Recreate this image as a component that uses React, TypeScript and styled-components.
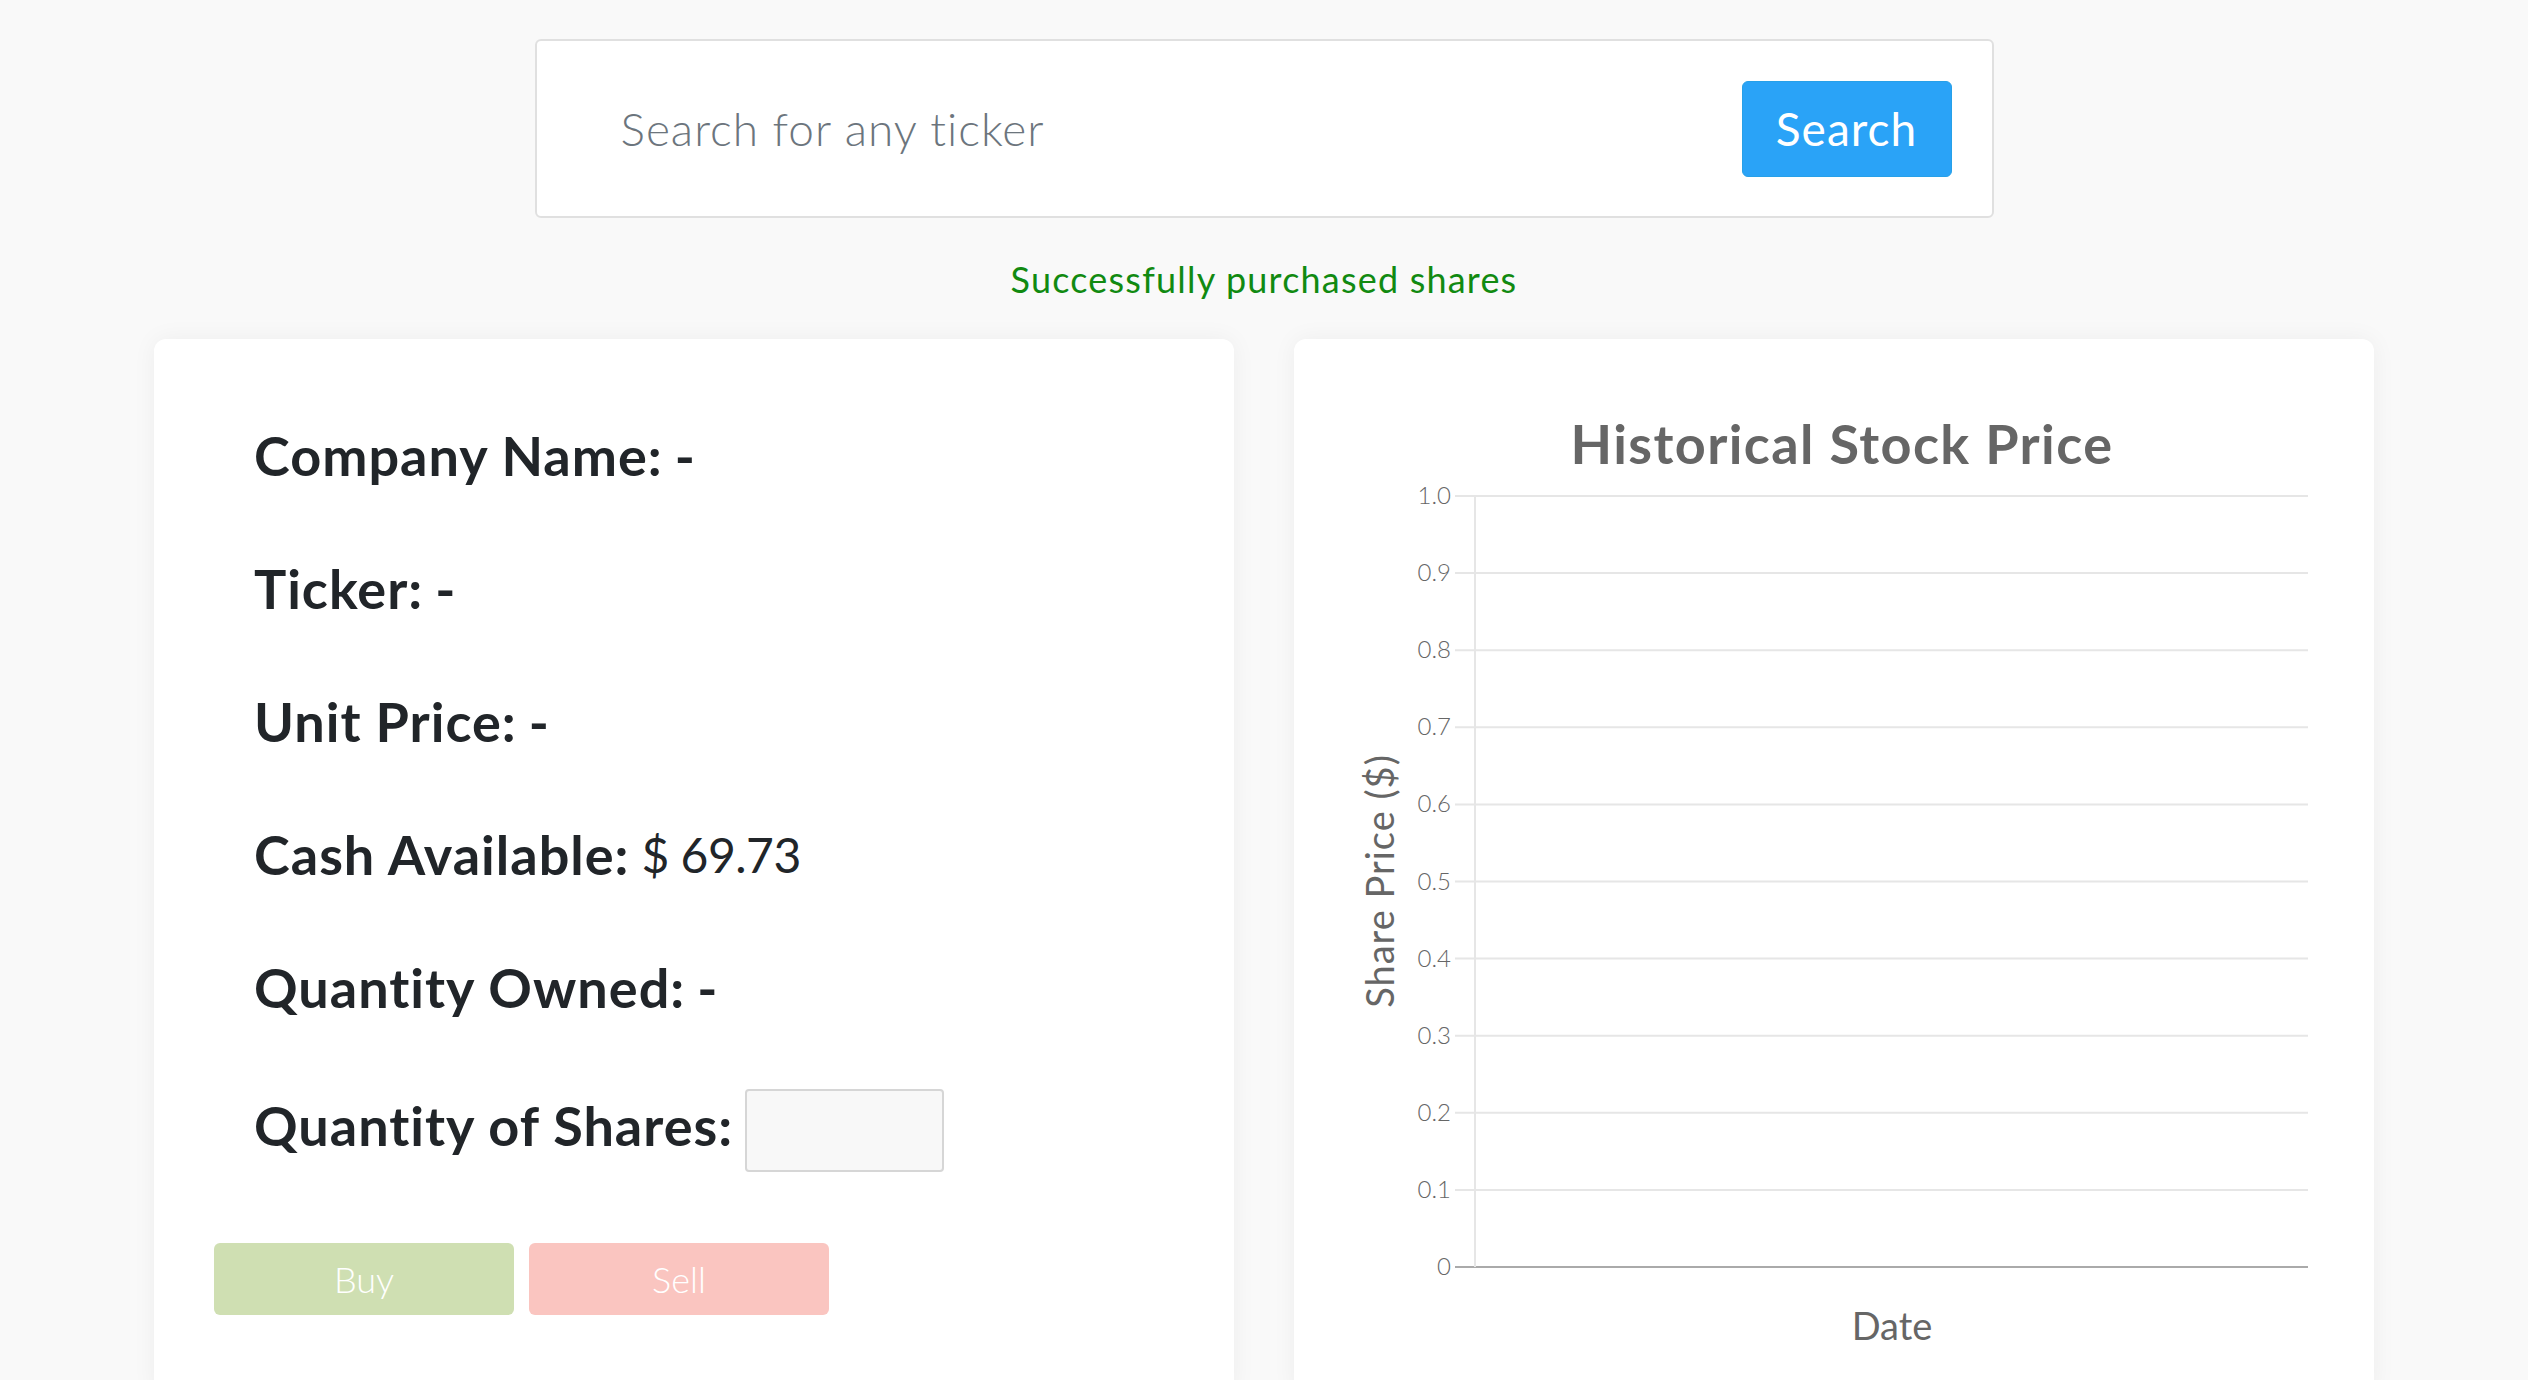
import * as React from "react";
import styled, { createGlobalStyle } from "styled-components";

const GlobalStyle = createGlobalStyle`
  html, body {
    margin: 0;
    padding: 0;
    background: #f9f9f9;
    font-family: Lato, "Noto Sans", sans-serif;
    color: #212529;
  }
  * { box-sizing: border-box; }
`;

const Page = styled.div`
  display: flex;
  flex-direction: column;
  align-items: center;
  padding-top: 39px;
`;

const SearchBar = styled.form`
  width: 1459px;
  height: 179px;
  display: flex;
  align-items: center;
  gap: 20px;
  padding: 0 40px 0 84px;
  background: #fff;
  border: 2px solid #e0e0e0;
  border-radius: 6px;
`;

const SearchInput = styled.input`
  flex: 1;
  border: none;
  outline: none;
  background: transparent;
  font-family: inherit;
  font-size: 46px;
  letter-spacing: 1px;
  font-weight: 300;
  color: #495057;
  padding: 0;

  &::placeholder {
    color: #6c757d;
  }
`;

const SearchButton = styled.button`
  width: 210px;
  height: 96px;
  border: 1px solid #27a0e8;
  border-radius: 6px;
  background: #2aa3f7;
  color: #fff;
  font-family: inherit;
  font-size: 46px;
  letter-spacing: 1px;
  font-weight: 400;
  cursor: pointer;
`;

const Message = styled.p`
  margin: 41px 0 40px;
  line-height: 40px;
  font-size: 36px;
  letter-spacing: 1.2px;
  color: #118a11;
`;

const Cards = styled.div`
  width: 2220px;
  display: flex;
  gap: 60px;
`;

const Card = styled.section`
  flex: 1;
  background: #fff;
  border-radius: 12px;
  box-shadow: 0 0 24px rgba(0, 0, 0, 0.05);
`;

const InfoCard = styled(Card)`
  padding: 85px 60px 80px;
`;

const InfoList = styled.div`
  display: flex;
  flex-direction: column;
  gap: 69px;
  padding-left: 40px;
`;

const InfoRow = styled.div`
  display: flex;
  align-items: center;
  gap: 12px;
  font-size: 54px;
  letter-spacing: 1px;
  line-height: 64px;
  font-weight: 700;
  color: #212529;
`;

const FieldLabel = styled.span`
  padding-bottom: 10px;
`;

const Value = styled.span<{ $light?: boolean }>`
  font-weight: ${({ $light }) => ($light ? 400 : 700)};
  font-size: ${({ $light }) => ($light ? "48px" : "inherit")};
  letter-spacing: ${({ $light }) => ($light ? "-0.5px" : "inherit")};
`;

const QtyInput = styled.input`
  width: 199px;
  height: 83px;
  background: #f8f8f8;
  border: 2px solid #d6d6d6;
  border-radius: 4px;
  font-family: inherit;
  font-size: 36px;
  padding: 0 12px;
`;

const Actions = styled.div`
  display: flex;
  gap: 15px;
  margin-top: 71px;
`;

const TradeButton = styled.button<{ $kind: "buy" | "sell" }>`
  width: 300px;
  height: 72px;
  border: none;
  border-radius: 6px;
  background: ${({ $kind }) => ($kind === "buy" ? "#cfdfb2" : "#fac5c0")};
  color: #fff;
  font-family: inherit;
  font-size: 36px;
  font-weight: 300;
`;

const ChartCard = styled(Card)`
  display: flex;
  flex-direction: column;
  padding-top: 73px;
`;

const ChartTitle = styled.h2`
  margin: 0 0 3px;
  padding-left: 16px;
  text-align: center;
  font-size: 54px;
  letter-spacing: 1.4px;
  line-height: 64px;
  font-weight: 700;
  color: #666;
`;

const ChartSvg = styled.svg`
  display: block;
  font-family: Lato, "Noto Sans", sans-serif;
`;

const ticks = [1.0, 0.9, 0.8, 0.7, 0.6, 0.5, 0.4, 0.3, 0.2, 0.1, 0];

const PriceChart = () => {
  const top = 17;
  const step = 77.1;
  const left = 181;
  const right = 1014;
  const bottom = top + step * 10;
  return (
    <ChartSvg width={1080} height={910} viewBox="0 0 1080 910">
      {ticks.map((t, i) => {
        const y = top + i * step;
        const label = t === 0 ? "0" : t.toFixed(1);
        return (
          <g key={label}>
            <line
              x1={161}
              x2={right}
              y1={y}
              y2={y}
              stroke={t === 0 ? "#aaaaaa" : "#e6e6e6"}
              strokeWidth={2}
            />
            <text
              x={157}
              y={y + 8}
              textAnchor="end"
              fontSize={24}
              fontWeight={300}
              fill="#666"
            >
              {label}
            </text>
          </g>
        );
      })}
      <line x1={left} x2={left} y1={top} y2={bottom} stroke="#e6e6e6" strokeWidth={2} />
      <text
        transform="translate(100 402) rotate(-90)"
        textAnchor="middle"
        fontSize={38}
        letterSpacing={1}
        fill="#666"
      >
        Share Price ($)
      </text>
      <text x={598} y={861} textAnchor="middle" fontSize={38} fill="#666">
        Date
      </text>
    </ChartSvg>
  );
};

export default function App() {
  return (
    <>
      <GlobalStyle />
      <Page>
        <SearchBar onSubmit={(e) => e.preventDefault()}>
          <SearchInput placeholder="Search for any ticker" />
          <SearchButton type="submit">Search</SearchButton>
        </SearchBar>
        <Message>Successfully purchased shares</Message>
        <Cards>
          <InfoCard>
            <InfoList>
              <InfoRow>
                Company Name: <Value>-</Value>
              </InfoRow>
              <InfoRow>
                Ticker: <Value>-</Value>
              </InfoRow>
              <InfoRow>
                Unit Price: <Value>-</Value>
              </InfoRow>
              <InfoRow>
                Cash Available: <Value $light>$ 69.73</Value>
              </InfoRow>
              <InfoRow>
                Quantity Owned: <Value>-</Value>
              </InfoRow>
              <InfoRow>
                <FieldLabel>Quantity of Shares:</FieldLabel>
                <QtyInput type="text" />
              </InfoRow>
            </InfoList>
            <Actions>
              <TradeButton $kind="buy" disabled>
                Buy
              </TradeButton>
              <TradeButton $kind="sell" disabled>
                Sell
              </TradeButton>
            </Actions>
          </InfoCard>
          <ChartCard>
            <ChartTitle>Historical Stock Price</ChartTitle>
            <PriceChart />
          </ChartCard>
        </Cards>
      </Page>
    </>
  );
}
